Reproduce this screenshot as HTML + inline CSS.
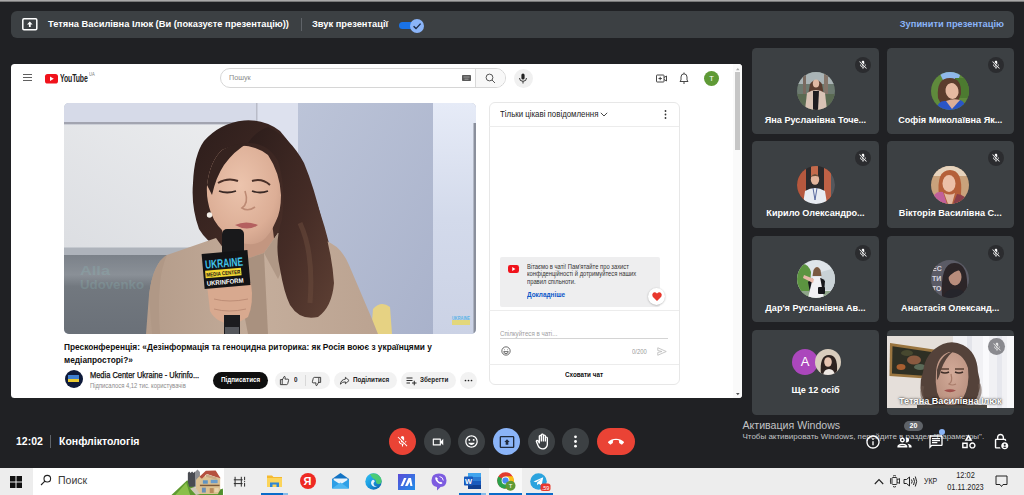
<!DOCTYPE html>
<html lang="uk">
<head>
<meta charset="utf-8">
<title>Meet</title>
<style>
*{box-sizing:border-box;margin:0;padding:0}
html,body{width:1024px;height:495px;overflow:hidden}
body{background:#202124;font-family:"Liberation Sans",sans-serif;position:relative;color:#fff}
.abs{position:absolute}
svg{position:absolute;overflow:visible}
#topstrip{left:0;top:0;width:1024px;height:2px;background:linear-gradient(#a9a8a8 0,#a9a8a8 55%,#3b3b3d 100%)}
#topbar{left:11px;top:11px;width:1003px;height:27px;background:#3c4043;border-radius:6px}
.gs{font-size:9.3px;font-weight:bold;white-space:nowrap}
#topbar .t{position:absolute;top:0;line-height:27px}
#pres{left:11px;top:64px;width:730.500px;height:334.200px;background:#fff;border-radius:3.500px;overflow:hidden;color:#0f0f0f}
.tile{background:#3c4043;border-radius:4.500px;overflow:hidden}
.tile .nm{position:absolute;left:0;right:0;text-align:center;font-size:9.100px;font-weight:bold;white-space:nowrap;color:#fff;line-height:12px}
.micb{position:absolute;width:16px;height:16px;border-radius:50%;background:#2b2c2f}
.av{position:absolute;width:38px;height:38px;border-radius:50%;overflow:hidden}
.av svg{left:0;top:0}
#taskbar{left:0;top:467.500px;width:1024px;height:27.500px;background:#ededed;color:#222}
.cb{position:absolute;top:428px;width:27px;height:27px;border-radius:50%;background:#3c4043}
</style>
</head>
<body>
<div id="topstrip" class="abs"></div>
<div id="topbar" class="abs">
  <svg style="left:11px;top:7px" width="16" height="13" viewBox="0 0 16 13"><rect x="0.8" y="0.8" width="14" height="11" rx="1.2" fill="none" stroke="#fff" stroke-width="1.5"/><path d="M7.8 3.4 L10.6 6.4 H8.7 V9 H6.9 V6.4 H5 Z" fill="#fff"/></svg>
  <span class="t gs" style="left:37px">Тетяна Василівна Ілюк (Ви (показуєте презентацію))</span>
  <div class="abs" style="left:290px;top:7px;width:1px;height:13px;background:#5f6368"></div>
  <span class="t gs" style="left:301px">Звук презентації</span>
  <div class="abs" style="left:388px;top:11px;width:23px;height:7px;border-radius:4px;background:#1a73e8"></div>
  <div class="abs" style="left:399px;top:8px;width:14px;height:14px;border-radius:50%;background:#8ab4f8"></div>
  <svg style="left:399px;top:8px" width="14" height="14" viewBox="0 0 14 14"><path d="M3.6 7.2 L6 9.6 L10.6 4.6" fill="none" stroke="#1c2a44" stroke-width="1.4"/></svg>
  <span class="t gs" style="right:10px;color:#8ab4f8">Зупинити презентацію</span>
</div>
<div id="pres" class="abs"><!--PRES_START-->
<style>
#pres .x{position:absolute;white-space:nowrap;transform-origin:0 50%;transform:scaleX(.9)}
#pres .pill{position:absolute;top:308px;height:17px;border-radius:9px;background:#f2f2f2}
</style>
<!-- header -->
<div class="abs" style="left:12px;top:10px;width:9px;height:1px;background:#606060"></div>
<div class="abs" style="left:12px;top:13px;width:9px;height:1px;background:#606060"></div>
<div class="abs" style="left:12px;top:16px;width:9px;height:1px;background:#606060"></div>
<svg style="left:34px;top:9.500px" width="13" height="10" viewBox="0 0 13 10"><rect width="13" height="9.500" rx="2.600" fill="#f0121b"/><path d="M5 2.500 L8.800 4.750 L5 7 Z" fill="#fff"/></svg>
<div class="x" style="left:48.500px;top:8px;font-size:11.500px;line-height:13px;font-weight:bold;color:#212121;transform:scaleX(.6);letter-spacing:-.2px">YouTube</div>
<div class="x" style="left:78px;top:7.500px;font-size:4.500px;line-height:6px;color:#777">UA</div>
<div class="abs" style="left:209px;top:4px;width:286px;height:20px;border:1px solid #d6d6d6;border-radius:10px;background:#fff;overflow:hidden">
  <div class="abs" style="left:254px;top:0;width:31px;height:18px;background:#f8f8f8;border-left:1px solid #d9d9d9"></div>
</div>
<div class="x" style="left:218px;top:8px;font-size:8px;line-height:11px;color:#8a8a8a">Пошук</div>
<svg style="left:451px;top:11px" width="9" height="6" viewBox="0 0 9 6"><rect width="9" height="6" rx=".8" fill="#5a5a5a"/><path d="M1.500 2 H7.500 M2.500 4.200 H6.500" stroke="#bbb" stroke-width=".7"/></svg>
<svg style="left:474px;top:8.500px" width="11" height="11" viewBox="0 0 11 11" fill="none" stroke="#444" stroke-width=".9"><circle cx="4.500" cy="4.500" r="3.400"/><path d="M7 7 L10 10"/></svg>
<div class="abs" style="left:502.500px;top:4.500px;width:19px;height:19px;border-radius:50%;background:#f0f0f0"></div>
<svg style="left:507px;top:8.500px" width="10" height="11" viewBox="0 0 10 11"><rect x="3.400" y="0.500" width="3.200" height="6" rx="1.600" fill="#222"/><path d="M1.500 5 Q1.500 8.300 5 8.300 Q8.500 8.300 8.500 5 M5 8.300 V10.500" stroke="#222" stroke-width=".9" fill="none"/></svg>
<svg style="left:645px;top:9.500px" width="11" height="9" viewBox="0 0 11 9" fill="none" stroke="#333" stroke-width=".9"><rect x=".5" y="1" width="7.500" height="7" rx=".6"/><path d="M8 3.500 L10.500 2 V7 L8 5.500 M4.200 2.800 V6.200 M2.500 4.500 H5.900"/></svg>
<svg style="left:668px;top:8px" width="10" height="12" viewBox="0 0 10 12" fill="none" stroke="#333" stroke-width=".9"><path d="M1 9.500 H9 L8 8 V5 Q8 2 5 1.800 Q2 2 2 5 V8 Z M4 11 H6 M5 0.500 V1.800"/></svg>
<div class="abs" style="left:693px;top:6.500px;width:15px;height:15px;border-radius:50%;background:#5f9a36;color:#fff;font-size:7.500px;line-height:15px;text-align:center">Т</div>
<!-- scrollbar -->
<div class="abs" style="left:722px;top:0;width:9px;height:335px;background:#fafafa"></div>
<div class="abs" style="left:723.500px;top:8.300px;width:5.300px;height:78px;background:#c6c6c6"></div>
<svg style="left:724.700px;top:3.500px" width="3.600" height="2.200" viewBox="0 0 5 3"><path d="M0 3 L2.500 0 L5 3Z" fill="#a8a8a8"/></svg>
<svg style="left:724.700px;top:328.800px" width="3.600" height="2.200" viewBox="0 0 5 3"><path d="M0 0 L2.500 3 L5 0Z" fill="#505050"/></svg>

<!-- video -->
<div class="abs" id="vid" style="left:53px;top:38.500px;width:411.500px;height:231px;border-radius:5px;overflow:hidden;background:#c5cbd9"><!--VIDEO_START-->
<svg style="left:0;top:0" width="413" height="231" viewBox="0 0 413 231">
<defs>
<linearGradient id="wl" x1="1" y1="0" x2="0" y2="1"><stop offset="0" stop-color="#ecedef"/><stop offset="1" stop-color="#dcdee2"/></linearGradient>
<linearGradient id="gl" x1="0" y1="0" x2="0" y2="1"><stop offset="0" stop-color="#7b8189"/><stop offset=".25" stop-color="#8a9097"/><stop offset=".4" stop-color="#72787f"/><stop offset="1" stop-color="#6a7078"/></linearGradient>
<linearGradient id="rp" x1="0" y1="0" x2="1" y2="1"><stop offset="0" stop-color="#bcc4d8"/><stop offset="1" stop-color="#a9b2cb"/></linearGradient>
<linearGradient id="rs" x1="0" y1="0" x2="0" y2="1"><stop offset="0" stop-color="#e6ebf7"/><stop offset=".5" stop-color="#d3daeb"/><stop offset="1" stop-color="#cbd2e5"/></linearGradient><radialGradient id="fc" cx=".45" cy=".4" r=".7"><stop offset="0" stop-color="#ecc4ad"/><stop offset=".7" stop-color="#dcae96"/><stop offset="1" stop-color="#c79a84"/></radialGradient><linearGradient id="hr" x1="0" y1="0" x2="1" y2="1"><stop offset="0" stop-color="#2c1d1b"/><stop offset=".55" stop-color="#452c26"/><stop offset="1" stop-color="#5e4034"/></linearGradient>
<linearGradient id="bz" x1="0" y1="0" x2="1" y2="0"><stop offset="0" stop-color="#b49c8a"/><stop offset=".5" stop-color="#c4ad9b"/><stop offset="1" stop-color="#bba391"/></linearGradient>
</defs>
<rect width="413" height="231" fill="#c5cbd9"/>
<rect x="0" y="0" width="193" height="20" fill="#d6daE8"/>
<rect x="0" y="19" width="193" height="2.500" fill="#a2a4b0"/>
<rect x="0" y="21.500" width="193" height="124" fill="url(#wl)"/>
<rect x="0" y="144.500" width="193" height="8" fill="#aeb3bb"/>
<rect x="0" y="152" width="193" height="79" fill="url(#gl)"/>
<g opacity=".22" fill="#8fc4c2" font-family="Liberation Sans,sans-serif" font-weight="bold" font-size="12"><text x="16" y="172" textLength="30" lengthAdjust="spacingAndGlyphs">Alla</text><text x="16" y="186" textLength="64" lengthAdjust="spacingAndGlyphs">Udovenko</text></g>
<rect x="193" y="0" width="41" height="231" fill="#dde1ee"/>
<rect x="192" y="0" width="1.500" height="145" fill="#b9bcc8"/>
<rect x="234" y="0" width="135" height="231" fill="url(#rp)"/>
<rect x="369" y="0" width="44" height="231" fill="url(#rs)"/>
<rect x="409.500" y="20" width="2.500" height="211" fill="#8a8f9c"/>
<!-- chair -->
<path d="M307 231 L309 206 Q317 197 326 204 L328 231 Z" fill="#e6d283"/>
<!-- hair back -->
<path d="M180 17.500 Q156 20 140 38 Q130 52 129 80 Q127 104 135 126 Q142 138 156 146 L240 216 Q254 218 262 208 Q274 190 269 160 Q264 130 250 92 Q242 58 216 28 Q200 16 180 17.500 Z" fill="url(#hr)"/>
<!-- neck -->
<path d="M158 126 L208 120 L214 166 L160 166 Z" fill="#c39680"/>
<!-- blazer -->
<path d="M82 231 L85 192 Q89 160 103 152 L152 135 L170 160 L200 150 L214 130 L262 138 Q277 143 285 162 L308 216 L314 231 Z" fill="url(#bz)"/>
<path d="M170 160 L184 231 L204 231 L200 150 Z" fill="#a9917f"/>
<path d="M200 150 L214 130 L226 150 L214 176 Z" fill="#b09886"/>
<path d="M103 152 Q92 175 96 231 L88 231 L85 192 Q89 160 103 152Z" fill="#b09886"/>
<!-- face -->
<path d="M143 82 Q146 58 158 47 Q182 36 204 52 Q216 70 217 92 Q217 108 212 118 Q206 132 198 138 Q184 146 166 134 Q152 124 147 110 Q142 96 143 82 Z" fill="url(#fc)"/>
<path d="M158 47 Q170 40 184 40 Q170 48 160 62 Q152 74 148 92 L143 82 Q146 58 158 47Z" fill="#35231f"/>
<path d="M154 80 Q164 74 174 78 M188 78 Q198 75 206 82" stroke="#4a3028" stroke-width="2" fill="none"/>
<path d="M155 88 Q163 91 172 88 M188 88 Q196 91 204 88" stroke="#3a2a26" stroke-width="1.800" fill="none"/>
<path d="M181 88 Q185 100 178 105 Q184 109 191 104" stroke="#bd8a74" stroke-width="1.600" fill="none"/>
<path d="M171 122 Q182 117 194 122 Q183 129 171 122Z" fill="#b4605f"/>
<circle cx="145.500" cy="112" r="2.700" fill="#f3efe9"/>
<!-- hair front right -->
<path d="M184 40 Q204 40 214 58 Q222 84 218 116 Q210 140 216 166 Q220 190 226 202 Q236 218 254 214 Q268 204 270 180 Q268 150 258 118 Q250 84 240 60 Q226 34 204 24 Q192 28 184 40 Z" fill="url(#hr)"/>
<path d="M236 120 Q250 150 246 200" stroke="#6a4a3c" stroke-width="5" fill="none" opacity=".55"/>
<!-- hand -->
<path d="M143 182 L187 180 Q190 200 184 214 L170 222 Q152 220 146 208 Z" fill="#d8a98f"/>
<path d="M150 196 Q165 200 184 196 M150 206 Q165 210 182 206" stroke="#bd8d76" stroke-width="1" fill="none"/>
<!-- mic -->
<rect x="158" y="126" width="22" height="28" rx="5" fill="#19191b"/>
<rect x="160" y="212" width="16" height="19" fill="#1c1c1f"/>
<rect x="161" y="224" width="14" height="7" fill="#55575c"/>
<g transform="rotate(-5 162 166)">
<rect x="139" y="149" width="46" height="35" fill="#131315"/>
<text x="141.500" y="164" font-family="Liberation Sans,sans-serif" font-weight="bold" font-size="12" fill="#41c3ea" textLength="38" lengthAdjust="spacingAndGlyphs">UKRAINE</text>
<rect x="141" y="166" width="36" height="7.500" fill="#f3d834"/>
<text x="142" y="172" font-family="Liberation Sans,sans-serif" font-weight="bold" font-size="5.500" fill="#131315" textLength="34" lengthAdjust="spacingAndGlyphs">MEDIA CENTER</text>
<text x="141.500" y="181" font-family="Liberation Sans,sans-serif" font-weight="bold" font-size="6.500" fill="#fff" textLength="37" lengthAdjust="spacingAndGlyphs">UKRINFORM</text>
</g>
<!-- watermark -->
<rect x="388" y="217" width="18" height="5" fill="#e8d860" opacity=".8"/>
<text x="388" y="217" font-family="Liberation Sans,sans-serif" font-weight="bold" font-size="5" fill="#5bb4e6" textLength="18" lengthAdjust="spacingAndGlyphs">UKRAINE</text>
</svg>

<!--VIDEO_END--></div>

<!-- title -->
<div class="x" style="left:53px;top:277.200px;font-size:9.300px;line-height:13.200px;font-weight:bold;color:#0f0f0f;transform:scaleX(.895)">Пресконференція: «Дезінформація та геноцидна риторика: як Росія воює з українцями у<br>медіапросторі?»</div>
<!-- channel -->
<div class="abs" style="left:53.500px;top:306px;width:18px;height:18px;border-radius:50%;background:#0e1a3a;overflow:hidden"><div class="abs" style="left:3.500px;top:5px;width:11px;height:3.500px;background:#3f7fd0"></div><div class="abs" style="left:3.500px;top:8.500px;width:11px;height:3.500px;background:#e8c930"></div></div>
<div class="x" style="left:78.500px;top:306px;font-size:8.300px;line-height:11px;color:#0f0f0f;-webkit-text-stroke:.25px #0f0f0f">Media Center Ukraine - Ukrinfo...</div>
<div class="x" style="left:78.500px;top:316.500px;font-size:6.500px;line-height:9px;color:#8a8a8a">Підписалося 4,12 тис. користувачів</div>
<div class="abs" style="left:201.500px;top:307.500px;width:55px;height:17px;border-radius:9px;background:#0f0f0f"></div>
<div class="x" style="left:209.500px;top:311px;font-size:7px;line-height:10px;color:#fff;font-weight:bold">Підписатися</div>
<!-- pills -->
<div class="pill" style="left:264px;width:55px"></div>
<div class="abs" style="left:293.500px;top:311px;width:1px;height:11px;background:#d8d8d8"></div>
<svg style="left:268px;top:311px" width="11" height="11" viewBox="0 0 24 24" fill="none" stroke="#222" stroke-width="1.800"><path d="M3 10 H7 V21 H3 Z M7 11 L11.500 3 Q14 3 13.500 6 L13 9 H19.500 Q21.500 9 21 11.500 L19 19 Q18.500 21 16.500 21 H7"/></svg>
<div class="x" style="left:283px;top:311px;font-size:7px;line-height:10px;font-weight:bold;color:#222">0</div>
<svg style="left:299.500px;top:311.500px" width="11" height="11" viewBox="0 0 24 24" fill="none" stroke="#222" stroke-width="1.800"><path d="M21 14 H17 V3 H21 Z M17 13 L12.500 21 Q10 21 10.500 18 L11 15 H4.500 Q2.500 15 3 12.500 L5 5 Q5.500 3 7.500 3 H17"/></svg>
<div class="pill" style="left:323px;width:62.500px"></div>
<svg style="left:327.500px;top:311px" width="11" height="11" viewBox="0 0 24 24" fill="none" stroke="#222" stroke-width="1.800"><path d="M14 5 L22 12 L14 19 V15 Q7 14.500 3 20 Q4 10.500 14 9 Z"/></svg>
<div class="x" style="left:342px;top:311px;font-size:7px;line-height:10px;font-weight:bold;color:#222">Поділитися</div>
<div class="pill" style="left:390px;width:54.500px"></div>
<svg style="left:394.500px;top:311.500px" width="11" height="10" viewBox="0 0 22 20" fill="none" stroke="#222" stroke-width="1.900"><path d="M1 4 H13 M1 9 H13 M1 14 H8 M12 14 H21 M16.500 9.500 V18.500"/></svg>
<div class="x" style="left:409px;top:311px;font-size:7px;line-height:10px;font-weight:bold;color:#222">Зберегти</div>
<div class="pill" style="left:449px;width:17px"></div>
<svg style="left:449px;top:308px" width="17" height="17" fill="#222"><circle cx="5.500" cy="8.500" r=".85"/><circle cx="8.500" cy="8.500" r=".85"/><circle cx="11.500" cy="8.500" r=".85"/></svg>

<!-- chat -->
<div class="abs" style="left:477.500px;top:38px;width:191.500px;height:283px;border:1px solid #e7e7e7;border-radius:6px;background:#fff"></div>
<div class="abs" style="left:478px;top:62px;width:190px;height:1px;background:#ececec"></div>
<div class="x" style="left:489px;top:45px;font-size:8.500px;line-height:11px;color:#222;transform:scaleX(.925)">Тільки цікаві повідомлення</div>
<svg style="left:589px;top:48px" width="8" height="5" viewBox="0 0 8 5" fill="none" stroke="#333" stroke-width=".9"><path d="M.8 .8 L4 4 L7.200 .8"/></svg>
<svg style="left:652px;top:45px" width="5" height="11" fill="#333"><circle cx="2.500" cy="2" r=".9"/><circle cx="2.500" cy="5.500" r=".9"/><circle cx="2.500" cy="9" r=".9"/></svg>
<div class="abs" style="left:489px;top:193px;width:160px;height:50px;background:#eeeeef;border-radius:2px"></div>
<svg style="left:497px;top:200.500px" width="11" height="8" viewBox="0 0 13 9.500"><rect width="13" height="9.500" rx="2.600" fill="#f0121b"/><path d="M5 2.500 L8.800 4.750 L5 7 Z" fill="#fff"/></svg>
<div class="x" style="left:516px;top:198.500px;font-size:6.400px;line-height:7.700px;color:#333;transform:scaleX(.91)">Вітаємо в чаті! Пам'ятайте про захист<br>конфіденційності й дотримуйтеся наших<br>правил спільноти.</div>
<div class="x" style="left:516px;top:226px;font-size:7px;line-height:9px;color:#0b57c9;font-weight:bold;transform:scaleX(.917)">Докладніше</div>
<div class="abs" style="left:637px;top:224px;width:17px;height:17px;border-radius:50%;background:#fff;box-shadow:0 .5px 2px rgba(0,0,0,.3)"></div>
<svg style="left:640.500px;top:228px" width="10" height="9" viewBox="0 0 20 18"><path d="M10 18 L1.500 9.500 Q-1 5 2 1.800 Q6 -1 10 3.200 Q14 -1 18 1.800 Q21 5 18.500 9.500 Z" fill="#e8382d"/></svg>
<div class="abs" style="left:478px;top:246px;width:190px;height:1px;background:#ececec"></div>
<div class="x" style="left:489px;top:264.500px;font-size:6.800px;line-height:9px;color:#a0a0a0;transform:scaleX(.91)">Спілкуйтеся в чаті...</div>
<div class="abs" style="left:489px;top:274px;width:168px;height:1px;background:#d4d4d4"></div>
<svg style="left:490px;top:282px" width="10" height="10" viewBox="0 0 24 24" fill="none" stroke="#444" stroke-width="1.900"><circle cx="12" cy="12" r="10"/><path d="M6.500 13.500 H17.500 Q16.500 18.500 12 18.500 Q7.500 18.500 6.500 13.500Z M8 9 H9.500 M14.500 9 H16"/></svg>
<div class="x" style="left:621px;top:283px;font-size:6.500px;line-height:9px;color:#9a9a9a">0/200</div>
<svg style="left:646px;top:282.500px" width="10" height="9" viewBox="0 0 20 18" fill="none" stroke="#bdbdbd" stroke-width="1.700"><path d="M1.500 1.500 L18.500 9 L1.500 16.500 V11 L10 9 L1.500 7 Z"/></svg>
<div class="abs" style="left:478px;top:300px;width:190px;height:1px;background:#ececec"></div>
<div class="x" style="left:553.500px;top:305.500px;font-size:7px;line-height:10px;color:#0f0f0f;font-weight:bold">Сховати чат</div>

<!--PRES_END--></div>

<!--TILES_START-->
<svg width="0" height="0" style="position:absolute"><defs>
<symbol id="micoff" viewBox="0 0 24 24"><path d="M19 11h-1.700c0 .740-.160 1.430-.430 2.050l1.230 1.230c.560-.980.900-2.090.900-3.280zm-4.020.170c0-.060.020-.110.020-.170V5c0-1.660-1.340-3-3-3S9 3.340 9 5v.180l5.980 5.990zM4.270 3L3 4.270l6.010 6.010V11c0 1.660 1.330 3 2.990 3 .220 0 .440-.030.650-.080l1.660 1.660c-.710.330-1.500.520-2.310.520-2.760 0-5.300-2.100-5.300-5.100H5c0 3.410 2.720 6.230 6 6.720V21h2v-3.280c.910-.130 1.770-.450 2.540-.900L19.730 21 21 19.730 4.270 3z"/></symbol>
</defs></svg>

<div class="tile abs" style="left:752px;top:48px;width:127px;height:86px">
  <div class="av" style="left:45px;top:24px"><svg width="38" height="38" viewBox="0 0 38 38"><rect width="38" height="38" fill="#6c7a70"/><rect width="38" height="12" fill="#aab4b6"/><rect x="6" y="0" width="3" height="24" fill="#7a6a60"/><rect x="27" y="0" width="4" height="26" fill="#85756a"/><rect x="0" y="22" width="38" height="16" fill="#5a6a52"/><path d="M13 12 q6 -8 12 0 l2 12 h-16 z" fill="#5b3d30"/><ellipse cx="19" cy="11.500" rx="3.200" ry="4" fill="#e0b9a3"/><path d="M8 38 l2 -17 q9 -6 18 0 l2 17 z" fill="#d9c3b5"/><path d="M16 19 h6 l-1 19 h-5 z" fill="#1d1c20"/></svg></div>
  <div class="micb" style="left:103px;top:9px"><svg style="left:3px;top:3px" width="10" height="10" fill="#fff"><use href="#micoff" width="10" height="10"/></svg></div>
  <div class="nm" style="top:66px">Яна Русланівна Точе...</div>
</div>
<div class="tile abs" style="left:887px;top:48px;width:126.500px;height:86px">
  <div class="av" style="left:44px;top:24px"><svg width="38" height="38" viewBox="0 0 38 38"><rect width="38" height="38" fill="#5f8a3c"/><path d="M8 0 h22 l-4 12 h-12 z" fill="#8fb8ea"/><rect x="24" y="6" width="14" height="20" fill="#4c7a30"/><path d="M7 26 q-2 -20 12 -20 q12 0 11 16 l-4 10 h-16 z" fill="#5c3d2e"/><ellipse cx="21" cy="19" rx="6.500" ry="8" fill="#e6b9a2" transform="rotate(-12 21 19)"/><path d="M5 38 q2 -10 10 -9 l6 5 l8 -6 q5 1 6 10 z" fill="#2a55c6"/><path d="M15 29 l6 8 l8 -9 q-7 -2 -14 1z" fill="#dcae98"/></svg></div>
  <div class="micb" style="left:101px;top:9px"><svg style="left:3px;top:3px" width="10" height="10" fill="#fff"><use href="#micoff" width="10" height="10"/></svg></div>
  <div class="nm" style="top:66px">Софія Миколаївна Як...</div>
</div>

<div class="tile abs" style="left:752px;top:141px;width:127px;height:87px">
  <div class="av" style="left:45px;top:25px"><svg width="38" height="38" viewBox="0 0 38 38"><rect width="38" height="38" fill="#2c2a2c"/><rect x="0" y="0" width="9" height="38" fill="#b5583e"/><rect x="14" y="0" width="7" height="14" fill="#c46a4c"/><rect x="27" y="2" width="7" height="36" fill="#bf6146"/><rect x="34" y="0" width="4" height="38" fill="#55575c"/><ellipse cx="18" cy="13.500" rx="4.200" ry="5.200" fill="#e2b49c"/><path d="M13.500 11 q4.500 -6 9 0 q-4 -2 -9 0z" fill="#6b4a34"/><path d="M6 38 l2 -13 q10 -6 20 0 l2 13 z" fill="#e8ecf2"/><path d="M16 22 l2 12 l2 -12" stroke="#5a6aa0" stroke-width="1" fill="none"/></svg></div>
  <div class="micb" style="left:103px;top:9px"><svg style="left:3px;top:3px" width="10" height="10" fill="#fff"><use href="#micoff" width="10" height="10"/></svg></div>
  <div class="nm" style="top:66px">Кирило Олександро...</div>
</div>
<div class="tile abs" style="left:887px;top:141px;width:126.500px;height:87px">
  <div class="av" style="left:44px;top:25px"><svg width="38" height="38" viewBox="0 0 38 38"><rect width="38" height="38" fill="#c9a27c"/><rect width="38" height="10" fill="#e6d3bd"/><path d="M8 30 q-3 -26 11 -26 q13 0 11 24 l2 10 h-22 z" fill="#b5603a"/><ellipse cx="18" cy="17.500" rx="6.500" ry="8.500" fill="#ecc0a8"/><path d="M0 38 q2 -14 12 -12 l4 12 z" fill="#c0609a"/><path d="M22 38 l4 -10 q8 0 12 10z" fill="#8a3f4a"/><path d="M13 27 l4 11 h4 l3 -11 q-5 3 -11 0z" fill="#e3b8a0"/></svg></div>
  <div class="micb" style="left:101px;top:9px"><svg style="left:3px;top:3px" width="10" height="10" fill="#fff"><use href="#micoff" width="10" height="10"/></svg></div>
  <div class="nm" style="top:66px">Вікторія Василівна С...</div>
</div>

<div class="tile abs" style="left:752px;top:236px;width:127px;height:86px">
  <div class="av" style="left:45px;top:24px"><svg width="38" height="38" viewBox="0 0 38 38"><rect width="38" height="38" fill="#dfe5ea"/><path d="M0 6 q10 -6 14 6 l-2 26 h-12z" fill="#5c9440"/><path d="M24 12 l14 -4 v22 h-14z" fill="#c9d2d6"/><rect x="0" y="31" width="38" height="7" fill="#8fa58a"/><ellipse cx="20" cy="11" rx="3" ry="3.800" fill="#e3b9a2"/><path d="M16.500 10 q3.500 -6 7 0 l1 6 h-9z" fill="#7a5a42"/><path d="M11 22 q9 -9 17 -1 l-1 12 h-14z" fill="#17181c"/><path d="M16 17 h7 l4 21 h-16z" fill="#f1f0f3"/><path d="M7 15 l10 4 l-1 4 l-10 -5z" fill="#e8b8a8"/><rect x="21" y="27" width="7" height="7" rx="1" fill="#15161a"/></svg></div>
  <div class="micb" style="left:103px;top:9px"><svg style="left:3px;top:3px" width="10" height="10" fill="#fff"><use href="#micoff" width="10" height="10"/></svg></div>
  <div class="nm" style="top:66px">Дар'я Русланівна Ав...</div>
</div>
<div class="tile abs" style="left:887px;top:236px;width:126.500px;height:86px">
  <div class="av" style="left:44px;top:24px"><svg width="38" height="38" viewBox="0 0 38 38"><rect width="38" height="38" fill="#5b5b66"/><text x="1" y="11" font-family="Liberation Sans,sans-serif" font-size="7" font-weight="bold" fill="#d8d8e0">ЕС</text><text x="1" y="21" font-family="Liberation Sans,sans-serif" font-size="7" font-weight="bold" fill="#d8d8e0">ТИ</text><text x="1" y="31" font-family="Liberation Sans,sans-serif" font-size="7" font-weight="bold" fill="#d8d8e0">ТО</text><path d="M11 38 q-2 -36 13 -35 q14 0 12 30 l0 5z" fill="#2c2528"/><ellipse cx="24" cy="17" rx="6.500" ry="8.500" fill="#b98d7c"/><path d="M17 12 q6 -8 14 -2 q-8 0 -14 8z" fill="#2c2528"/><path d="M12 38 q2 -9 12 -9 q10 0 12 9z" fill="#25252b"/></svg></div>
  <div class="micb" style="left:101px;top:9px"><svg style="left:3px;top:3px" width="10" height="10" fill="#fff"><use href="#micoff" width="10" height="10"/></svg></div>
  <div class="nm" style="top:66px">Анастасія Олександ...</div>
</div>

<div class="tile abs" style="left:752px;top:330px;width:127px;height:85px">
  <div class="abs" style="left:40px;top:19px;width:26px;height:26px;border-radius:50%;background:#ab47bc;color:#fff;font-size:13px;line-height:26px;text-align:center">А</div>
  <div class="av" style="left:63px;top:19px;width:26px;height:26px"><svg width="26" height="26" viewBox="0 0 26 26"><rect width="26" height="26" fill="#d9cdbd"/><path d="M6 26 q-2 -20 8 -20 q9 0 8 16 l-2 4z" fill="#2e2320"/><ellipse cx="13" cy="13" rx="3.800" ry="4.800" fill="#e7c4b0"/><path d="M8 26 q1 -6 6 -6 q5 0 6 6z" fill="#efe9e4"/></svg></div>
  <div class="nm" style="top:54px">Ще 12 осіб</div>
</div>
<div class="tile abs" style="left:887px;top:330px;width:126.500px;height:85px">
  <svg style="left:0;top:6px" width="127" height="72" viewBox="0 0 127 72"><defs><radialGradient id="tf" cx=".5" cy=".4" r=".65"><stop offset="0" stop-color="#d2aa98"/><stop offset="1" stop-color="#b88f7e"/></radialGradient></defs><rect width="127" height="72" fill="#e5dfda"/><rect x="66" y="0" width="61" height="72" fill="#f1f1f4"/><rect x="80" y="0" width="5" height="72" fill="#e3e4ea"/><rect x="96" y="0" width="6" height="72" fill="#fafafc"/><rect x="110" y="0" width="5" height="72" fill="#e6e7ed"/><rect x="120" y="0" width="7" height="72" fill="#f8f8fa"/><path d="M3 7 L47 13.500 L46 43 L2.500 40 Z" fill="#9a7540"/><path d="M5.500 10.200 L44.500 16 L43.700 40.300 L5 37.500 Z" fill="#2e2f24"/><ellipse cx="27" cy="24" rx="7" ry="4.500" fill="#8a5a40"/><ellipse cx="14" cy="31" rx="4.500" ry="3" fill="#a85f30"/><ellipse cx="33" cy="31" rx="6" ry="3" fill="#5a6a58"/><ellipse cx="20" cy="17" rx="6" ry="3" fill="#47482f"/>
<path d="M38 66 Q30 52 36 36 Q38 16 56 8 Q66 4 76 9 Q90 16 91 36 Q96 52 88 66 Q80 70 62 70 Q46 70 38 66Z" fill="#54423a"/><path d="M36 50 Q32 60 40 68 M92 48 Q96 60 86 68" stroke="#6a574c" stroke-width="3" fill="none" opacity=".6"/>
<path d="M49 36 Q50 20 62 16 Q76 16 81 32 Q83 50 76 62 Q70 70 62 70 Q54 68 50 56 Q48 46 49 36Z" fill="url(#tf)"/>
<path d="M50 34 Q54 18 66 15.500 Q58 22 54 34 Q52 42 50 44Z" fill="#54423a"/>
<path d="M53 33 h9 M68 33 h9" stroke="#5a4034" stroke-width="1.300"/><path d="M54 36 q4 2 8 0 M68 36 q4 2 8 0" stroke="#3e2e28" stroke-width="1.400" fill="none"/>
<path d="M64 38 Q66 46 62 48 Q65 50 69 48" stroke="#a87c6a" stroke-width="1.200" fill="none"/>
<path d="M57 54.500 Q63 52 69 54.500 Q63 58 57 54.500Z" fill="#a0504c"/>
<rect x="30" y="69" width="70" height="3" fill="#4a4642"/></svg>
  <div class="micb" style="left:101px;top:8px;width:17px;height:17px;background:rgba(120,120,124,.85)"><svg style="left:3.500px;top:3.500px" width="10" height="10" fill="#e8e8e8"><use href="#micoff" width="10" height="10"/></svg></div>
  <div class="nm" style="top:65px;text-shadow:0 0 1.500px rgba(0,0,0,.9),0 0 3px rgba(0,0,0,.5)">Тетяна Василівна Ілюк</div>
</div>

<!--TILES_END-->

<!--BOTTOM_START-->
<div class="abs gs" style="left:16px;top:434px;font-size:10.500px;line-height:14px">12:02</div>
<div class="abs" style="left:50px;top:435px;width:1px;height:13px;background:#5f6368"></div>
<div class="abs gs" style="left:59px;top:434px;font-size:10.500px;line-height:14px">Конфліктологія</div>

<div class="cb" style="left:389px;background:#ea4335"><svg style="left:7px;top:7px" width="13" height="13" fill="#fff"><use href="#micoff" width="13" height="13"/></svg></div>
<div class="cb" style="left:424px"><svg style="left:6.500px;top:6.500px" width="14" height="14" viewBox="0 0 24 24" fill="#fff"><path d="M15 8v8H5V8h10m1-2H4c-.550 0-1 .450-1 1v10c0 .550.450 1 1 1h12c.550 0 1-.450 1-1v-3.500l4 4v-11l-4 4V7c0-.550-.450-1-1-1z"/></svg></div>
<div class="cb" style="left:458px"><svg style="left:6px;top:6px" width="15" height="15" viewBox="0 0 24 24" fill="#fff"><path d="M11.990 2C6.470 2 2 6.480 2 12s4.470 10 9.990 10C17.520 22 22 17.520 22 12S17.520 2 11.990 2zM12 20c-4.420 0-8-3.580-8-8s3.580-8 8-8 8 3.580 8 8-3.580 8-8 8zm3.500-9c.830 0 1.500-.670 1.500-1.500S16.330 8 15.500 8 14 8.670 14 9.500s.670 1.500 1.500 1.500zm-7 0c.830 0 1.500-.670 1.500-1.500S9.330 8 8.500 8 7 8.670 7 9.500 7.670 11 8.500 11zm3.500 6.500c2.330 0 4.310-1.460 5.110-3.500H6.890c.800 2.040 2.780 3.500 5.110 3.500z"/></svg></div>
<div class="cb" style="left:493px;background:#8ab4f8"><svg style="left:5.500px;top:5.500px" width="16" height="16" viewBox="0 0 24 24" fill="#1f2a3c"><path d="M21 3H3c-1.110 0-2 .890-2 2v14c0 1.110.890 2 2 2h18c1.110 0 2-.890 2-2V5c0-1.110-.890-2-2-2zm0 16.020H3V4.980h18v14.040zM10 12H8l4-4 4 4h-2v4h-4v-4z"/></svg></div>
<div class="cb" style="left:528px"><svg style="left:5.500px;top:5px" width="16" height="17" viewBox="0 0 24 24" fill="#fff"><path d="M21 7c0-1.380-1.120-2.500-2.500-2.500-.170 0-.340.020-.500.050V4c0-1.380-1.120-2.500-2.500-2.500-.230 0-.460.030-.670.090C14.460.660 13.560 0 12.500 0c-1.230 0-2.250.890-2.460 2.060C9.870 2.020 9.690 2 9.500 2 8.120 2 7 3.120 7 4.500v5.890c-.340-.310-.760-.540-1.220-.660L5.010 9.500c-.830-.230-1.700.090-2.190.830-.380.570-.400 1.310-.150 1.950l2.560 6.430C6.490 21.910 9.570 24 13 24c4.420 0 8-3.580 8-8V7zm-2 9c0 3.310-2.690 6-6 6-2.610 0-4.950-1.590-5.910-4.010l-2.600-6.540.530.140c.460.120.830.460 1 .900L7 15h2V4.500c0-.280.220-.500.500-.500s.500.220.500.500V12h2V2.500c0-.280.220-.500.500-.500s.500.220.500.500V12h2V4c0-.280.220-.500.500-.500s.500.220.500.500v8h2V7c0-.280.220-.500.500-.500s.500.220.500.500v9z"/></svg></div>
<div class="cb" style="left:562px"><svg style="left:0;top:0" width="27" height="27" fill="#fff"><circle cx="13.500" cy="8.800" r="1.400"/><circle cx="13.500" cy="13.500" r="1.400"/><circle cx="13.500" cy="18.200" r="1.400"/></svg></div>
<div class="cb" style="left:597px;width:38px;border-radius:14px;background:#ea4335"><svg style="left:11px;top:6px" width="16" height="16" viewBox="0 0 24 24" fill="#fff"><path d="M12 9c-1.600 0-3.150.250-4.600.720v3.100c0 .390-.230.740-.560.900-.980.490-1.870 1.120-2.660 1.850-.180.180-.430.280-.700.280-.280 0-.530-.110-.710-.290L.290 13.080c-.180-.170-.290-.420-.290-.700 0-.280.110-.530.290-.710C3.340 8.780 7.460 7 12 7s8.660 1.780 11.710 4.670c.180.180.290.430.290.710 0 .280-.110.530-.290.710l-2.480 2.480c-.180.180-.430.290-.710.290-.270 0-.520-.110-.700-.280-.790-.740-1.690-1.360-2.670-1.850-.330-.160-.560-.500-.560-.900v-3.100C15.150 9.250 13.600 9 12 9z"/></svg></div>

<div class="abs" style="left:742.500px;top:417.700px;font-size:10.600px;line-height:15px;color:#c2c4c6;white-space:nowrap">Активация Windows</div>
<div class="abs" style="left:742.500px;top:431.300px;font-size:8px;line-height:11px;color:#c2c4c6;white-space:nowrap">Чтобы активировать Windows, перейдите в раздел "Параметры".</div>

<svg style="left:864.500px;top:433.500px" width="16" height="16" viewBox="0 0 24 24" fill="#fff"><path d="M11 7h2v2h-2zm0 4h2v6h-2zm1-9C6.480 2 2 6.480 2 12s4.480 10 10 10 10-4.480 10-10S17.520 2 12 2zm0 18c-4.410 0-8-3.590-8-8s3.590-8 8-8 8 3.590 8 8-3.590 8-8 8z"/></svg>
<svg style="left:895.500px;top:433.500px" width="17" height="17" viewBox="0 0 24 24" fill="#fff"><path d="M9 13.750c-2.340 0-7 1.170-7 3.500V19h14v-1.750c0-2.330-4.660-3.500-7-3.500zM4.340 17c.840-.580 2.870-1.250 4.660-1.250s3.820.670 4.660 1.250H4.340zM9 12c1.930 0 3.500-1.570 3.500-3.500S10.930 5 9 5 5.500 6.570 5.500 8.500 7.070 12 9 12zm0-5c.830 0 1.500.670 1.500 1.500S9.830 10 9 10s-1.500-.670-1.500-1.500S8.170 7 9 7zm7.040 6.810c1.160.840 1.960 1.960 1.960 3.440V19h4v-1.750c0-2.020-3.500-3.170-5.960-3.440zM15 12c1.930 0 3.500-1.570 3.500-3.500S16.930 5 15 5c-.540 0-1.040.130-1.500.350.630.890 1 1.980 1 3.150s-.370 2.260-1 3.150c.460.220.960.350 1.500.350z"/></svg>
<div class="abs" style="left:904px;top:421px;width:19px;height:10px;border-radius:5px;background:#5f6368;color:#fff;font-size:7px;font-weight:bold;line-height:10px;text-align:center">20</div>
<svg style="left:928px;top:434px" width="16" height="16" viewBox="0 0 24 24" fill="#fff"><path d="M4 4h16v12H5.170L4 17.170V4m0-2c-1.100 0-1.990.900-1.990 2L2 22l4-4h14c1.100 0 2-.900 2-2V4c0-1.100-.900-2-2-2H4zm2 10h8v2H6v-2zm0-3h12v2H6V9zm0-3h12v2H6V6z"/></svg>
<div class="abs" style="left:939px;top:429px;width:6px;height:6px;border-radius:50%;background:#8ab4f8"></div>
<svg style="left:960px;top:433px" width="17" height="17" viewBox="0 0 24 24" fill="#fff"><path d="M12 2l-5.500 9h11L12 2zm0 3.840L13.930 9h-3.870L12 5.840zM17.500 13c-2.490 0-4.500 2.010-4.500 4.500s2.010 4.500 4.500 4.500 4.500-2.010 4.500-4.500-2.010-4.500-4.500-4.500zm0 7c-1.380 0-2.500-1.120-2.500-2.500s1.120-2.500 2.500-2.500 2.500 1.120 2.500 2.500-1.120 2.500-2.500 2.500zM3 21.500h8v-8H3v8zm2-6h4v4H5v-4z"/></svg>
<svg style="left:992px;top:432.500px" width="17" height="17" viewBox="0 0 24 24" fill="#fff"><path d="M6 20V10h12v1c.700 0 1.370.100 2 .290V10c0-1.100-.900-2-2-2h-1V6c0-2.760-2.240-5-5-5S7 3.240 7 6v2H6c-1.100 0-2 .900-2 2v10c0 1.100.900 2 2 2h6.260c-.420-.600-.750-1.280-.970-2H6zM9 6c0-1.660 1.340-3 3-3s3 1.340 3 3v2H9V6z"/><path d="M18 13c-2.760 0-5 2.240-5 5s2.240 5 5 5 5-2.240 5-5-2.240-5-5-5zm0 2c.830 0 1.500.670 1.500 1.500S18.830 18 18 18s-1.500-.670-1.500-1.500.670-1.500 1.500-1.500zm0 6c-1.030 0-1.940-.520-2.480-1.320.730-.420 1.570-.680 2.480-.680s1.750.260 2.480.680c-.540.800-1.450 1.320-2.480 1.320z"/></svg>

<!--BOTTOM_END-->

<div id="taskbar" class="abs"><!--TASKBAR_START-->
<svg style="left:10px;top:8px" width="12" height="12" viewBox="0 0 12 12" fill="#111"><rect x="0" y="0" width="5.500" height="5.500"/><rect x="6.500" y="0" width="5.500" height="5.500"/><rect x="0" y="6.500" width="5.500" height="5.500"/><rect x="6.500" y="6.500" width="5.500" height="5.500"/></svg>
<div class="abs" style="left:33px;top:0;width:191px;height:27px;background:#fff;overflow:hidden">
  <svg style="left:7px;top:6px" width="12" height="12" viewBox="0 0 12 12" fill="none" stroke="#222" stroke-width="1.100"><circle cx="7.300" cy="4.700" r="3.300"/><path d="M4.900 7.100 L1 11"/></svg>
  <div class="abs" style="left:25px;top:5px;font-size:10.500px;line-height:14px;color:#3a3a3a">Поиск</div>
  <svg style="left:136px;top:0" width="55" height="27" viewBox="0 0 55 27.500"><path d="M2 27.500 L18 12.500 L26 20 L54.300 22 V27.500 Z" fill="#5f9a30"/><path d="M6 27.500 L17 15 L21 27.500 Z" fill="#8abf48"/><path d="M18.700 5 L20 3.500 L21.500 5 L23 3.500 L24.500 5 L26 3.500 V19 H20 L18.700 14 Z" fill="#494b51"/><path d="M26 4 L28.500 1.500 L31 4 V19 H26 Z" fill="#8d8e92"/><path d="M27 12 L31 8 L51.600 10 V26.500 H27 Z" fill="#dcc192"/><path d="M30.500 9 L37 2.800 L47 2.500 L52 10.500 L48 9.500 L38 6 L33 11 Z" fill="#b5503f"/><path d="M37 6 L48 9.500 L48 12 L37 9Z" fill="#c9ab86"/><rect x="34" y="12.500" width="5" height="3.500" fill="#5f93c2"/><rect x="42" y="12" width="7" height="3.500" fill="#6a9ccb"/><rect x="31" y="17" width="20" height="1.500" fill="#7d5a3b"/><rect x="33" y="20" width="4" height="5" fill="#6b8fb5"/><rect x="41" y="20.500" width="4" height="5" fill="#b98a5a"/><rect x="46" y="20.500" width="4" height="4" fill="#e8d4ac"/><path d="M26 19 L31 26.500 L27 27.500 L21 21Z" fill="#cfc9b8"/><path d="M49 27.500 Q51 22 54.300 21 V27.500Z" fill="#4f8f2e"/></svg>
</div>
<svg style="left:233px;top:8px" width="14" height="12" viewBox="0 0 14 12" fill="none" stroke="#2a2a2a" stroke-width="1"><path d="M2.100 0.800 V10.600 M8.300 0.800 V10.600 M0.800 3.800 H9.600 M0.800 7.600 H9.600 M11.600 0.800 V4.200 M11.600 7 V10.600"/><circle cx="11.600" cy="5.600" r=".6" fill="#2a2a2a" stroke="none"/></svg>

<!-- explorer -->
<svg style="left:267px;top:6px" width="15" height="14" viewBox="0 0 15 14"><path d="M0 1.500 H5 L6.500 3 H15 V13 H0 Z" fill="#f5b92e"/><rect x="0" y="4" width="15" height="9" fill="#fbd45a"/><path d="M3 13 V8.500 H12 V13 H9.500 V10.500 H5.500 V13 Z" fill="#2f86d6"/></svg>
<div class="abs" style="left:261px;top:25px;width:27px;height:2px;background:linear-gradient(90deg,#0a6cc9 0,#0a6cc9 82%,#86bdea 82%)"></div>
<!-- yandex -->
<div class="abs" style="left:299.500px;top:5.500px;width:16px;height:16px;border-radius:50%;background:#ee2a23;color:#fff;font-size:11px;font-weight:bold;line-height:16px;text-align:center">Я</div>
<!-- mail -->
<svg style="left:332px;top:5px" width="17" height="16" viewBox="0 0 17 16"><path d="M0 6 L8.500 0 L17 6 V15 H0 Z" fill="#1273c4"/><path d="M1.500 5.500 H15.500 V12 H1.500Z" fill="#e8f3fb"/><path d="M0 6 L8.500 11.500 L17 6 V15.500 H0 Z" fill="#2d9fe6"/><path d="M0 15.500 L8.500 9.500 L17 15.500 Z" fill="#4db7f2"/></svg>
<!-- edge -->
<svg style="left:365px;top:5px" width="17" height="17" viewBox="0 0 17 17"><defs><linearGradient id="eg" x1="0" y1="0" x2="1" y2="1"><stop offset="0" stop-color="#35c1f1"/><stop offset=".45" stop-color="#1b9de2"/><stop offset="1" stop-color="#0c59a4"/></linearGradient></defs><circle cx="8.500" cy="8.500" r="8.200" fill="url(#eg)"/><path d="M5 1.200 Q9 -0.500 13 1.800 Q16.500 4.500 16.700 8 Q16.500 11 13.500 11.200 Q11 11 11 9 Q11 6 8 5.500 Q6 3 5 1.200Z" fill="#4fd06a" opacity=".9"/><path d="M8 6.800 Q5.500 8 6.200 11 Q7.500 14.500 12 14 Q9 13.500 8.500 11 Q8.300 9.500 9.800 8.500 Q9.500 7 8 6.800Z" fill="#e9f4fb"/></svg>
<!-- MA -->
<svg style="left:398px;top:6px" width="17" height="16" viewBox="0 0 17 16"><defs><linearGradient id="mg" x1="0" y1="0" x2="1" y2="1"><stop offset="0" stop-color="#5a4bd8"/><stop offset="1" stop-color="#1f8fe8"/></linearGradient></defs><rect width="17" height="16" fill="url(#mg)"/><path d="M2.500 12 L6 4 H8.500 L5 12 Z M7 12 L10.500 4 H13 L14.500 12 H12.300 L11.700 8 L9.500 12 Z" fill="#fff"/></svg>
<!-- viber -->
<svg style="left:431px;top:5px" width="16" height="18" viewBox="0 0 16 18"><path d="M8 0.500 Q15.500 0.500 15.500 7.500 Q15.500 13.500 9.500 14 L6 17.500 V14 Q0.500 13 0.500 7.500 Q0.500 0.500 8 0.500Z" fill="#7d5ce0"/><path d="M5 4 Q4 4.500 4.300 6 Q5.500 9.500 9.500 11 Q11 11.200 11.500 10 L10 8.700 L9 9.300 Q7.200 8.500 6.300 6.500 L7 5.700 Z" fill="#fff"/><path d="M8.500 3.500 Q12 4 12.300 7.500" stroke="#fff" stroke-width=".9" fill="none"/></svg>
<!-- word -->
<svg style="left:464px;top:5.500px" width="17" height="16" viewBox="0 0 17 16"><rect x="4" y="0" width="13" height="16" rx="1" fill="#2b7cd3"/><rect x="4" y="0" width="13" height="4" fill="#41a5ee"/><rect x="4" y="8" width="13" height="4" fill="#185abd"/><rect x="4" y="12" width="13" height="4" fill="#103f91"/><rect x="0" y="3.500" width="9" height="9" rx=".8" fill="#185abd"/><text x="4.500" y="11" font-family="Liberation Sans,sans-serif" font-size="7.500" font-weight="bold" fill="#fff" text-anchor="middle">W</text></svg>
<div class="abs" style="left:459px;top:25px;width:27px;height:2px;background:linear-gradient(90deg,#0a6cc9 0,#0a6cc9 82%,#86bdea 82%)"></div>
<!-- chrome -->
<div class="abs" style="left:489px;top:0;width:33px;height:27px;background:#f8f8f8"></div>
<svg style="left:497px;top:4px" width="20" height="20" viewBox="0 0 20 20"><circle cx="8.500" cy="8.500" r="8.300" fill="#e33b2e"/><path d="M8.500 8.500 L1.300 4.400 A8.300 8.300 0 0 0 8.500 16.800 L12 10.500Z" fill="#2ba24c"/><path d="M8.500 8.500 L12.200 10.600 L8.500 16.800 A8.300 8.300 0 0 0 15.700 4.300 H8.500Z" fill="#fbc116"/><circle cx="8.500" cy="8.500" r="3.900" fill="#f3f3f3"/><circle cx="8.500" cy="8.500" r="3.100" fill="#4a8af4"/><circle cx="13.500" cy="13.700" r="5" fill="#5f9a36"/><text x="13.500" y="16" font-family="Liberation Sans,sans-serif" font-size="6" fill="#fff" text-anchor="middle">Т</text></svg>
<div class="abs" style="left:489px;top:25px;width:33px;height:2px;background:#0a6cc9"></div>
<!-- telegram -->
<svg style="left:530px;top:5px" width="22" height="20" viewBox="0 0 22 20"><circle cx="8.500" cy="8.500" r="8.300" fill="#2aa3de"/><path d="M3.500 8.500 L13.200 4.300 L11.600 12.800 L8.800 10.700 L7.300 12.200 L7 9.800 L11.200 6 L6 9.300 Z" fill="#fff"/><rect x="10.500" y="10.500" width="10" height="7.500" rx="2.500" fill="#e8382d"/><text x="15.500" y="16.500" font-family="Liberation Sans,sans-serif" font-size="5.500" fill="#fff" text-anchor="middle">.59</text></svg>
<div class="abs" style="left:525.500px;top:25px;width:27px;height:2px;background:#0a6cc9"></div>

<!-- tray -->
<svg style="left:874px;top:10px" width="10" height="7" viewBox="0 0 10 7" fill="none" stroke="#222" stroke-width="1.100"><path d="M0.800 6 L5 1.500 L9.200 6"/></svg>
<svg style="left:890px;top:7px" width="11" height="14" viewBox="0 0 11 14" fill="none" stroke="#333" stroke-width="1"><rect x="2" y="2.500" width="5" height="7" rx=".8"/><path d="M7 5 L9.500 3.500 V8.500 L7 7 M0.800 3 Q0 6 0.800 9 M3 11.500 Q4.500 12.500 6 11.500 M3 1 Q4.500 0 6 1"/></svg>
<svg style="left:903px;top:7px" width="14" height="13" viewBox="0 0 14 13" fill="none" stroke="#222" stroke-width="1"><path d="M1 4.500 H3.500 L6.500 2 V11 L3.500 8.500 H1 Z M8.500 4.500 Q9.800 6.500 8.500 8.500 M10.500 3 Q12.500 6.500 10.500 10 M12.300 1.500 Q15 6.500 12.300 11.500"/></svg>
<div class="abs" style="left:923.500px;top:8px;font-size:8.500px;line-height:11px;color:#222;transform-origin:0 50%;transform:scaleX(.82)">УКР</div>
<div class="abs" style="left:945px;top:2px;width:41px;font-size:8.500px;line-height:11px;color:#222;text-align:center;transform:scaleX(.87)">12:02</div>
<div class="abs" style="left:942px;top:14.500px;width:47px;font-size:8.500px;line-height:11px;color:#222;text-align:center;transform:scaleX(.87)">01.11.2023</div>
<svg style="left:995px;top:7px" width="13" height="13" viewBox="0 0 13 13" fill="none" stroke="#222" stroke-width="1"><path d="M1 1 H12 V9.500 H8 L6.500 11.500 L5 9.500 H1 Z"/></svg>

<!--TASKBAR_END--></div>
</body>
</html>
